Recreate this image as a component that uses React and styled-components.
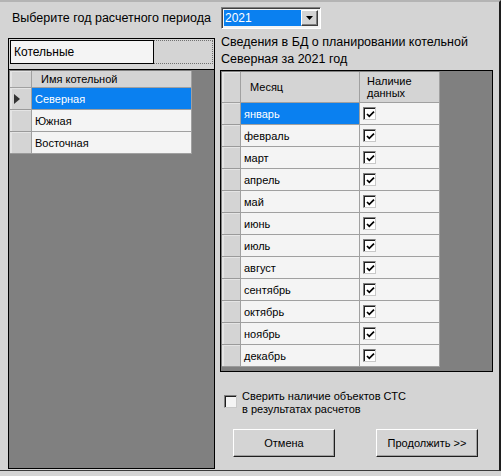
import styled, { createGlobalStyle } from "styled-components";

const GlobalStyle = createGlobalStyle`
  html, body {
    margin: 0;
    padding: 0;
    background: #d4d4d4;
  }
  * {
    box-sizing: border-box;
  }
`;

const boilers = ["Северная", "Южная", "Восточная"];

const months = [
  "январь",
  "февраль",
  "март",
  "апрель",
  "май",
  "июнь",
  "июль",
  "август",
  "сентябрь",
  "октябрь",
  "ноябрь",
  "декабрь",
];

function CheckMark() {
  return (
    <svg width="9" height="9" viewBox="0 0 9 9">
      <path d="M1 4 L3.3 6.4 L8 1.6" fill="none" stroke="#000" strokeWidth="1.7" />
    </svg>
  );
}

export default function App() {
  return (
    <>
      <GlobalStyle />
      <Window>
        <TopRow>
          <Label>Выберите год расчетного периода</Label>
          <Combo>
            <ComboValue>2021</ComboValue>
            <ComboButton>
              <svg width="7" height="4" viewBox="0 0 7 4">
                <polygon points="0,0 7,0 3.5,4" fill="#000" />
              </svg>
            </ComboButton>
          </Combo>
        </TopRow>

        <Main>
          <LeftPanel>
            <Caption>
              <DottedBox>
                <TextBox>Котельные</TextBox>
              </DottedBox>
            </Caption>
            <GridArea>
              <LeftRow $header>
                <RowHead $header />
                <HeadCell>Имя котельной</HeadCell>
              </LeftRow>
              {boilers.map((name, i) => (
                <LeftRow key={name}>
                  <RowHead>
                    {i === 0 && (
                      <svg width="6" height="10" viewBox="0 0 6 10">
                        <polygon points="0,0 6,5 0,10" fill="#333" />
                      </svg>
                    )}
                  </RowHead>
                  <Cell $selected={i === 0}>{name}</Cell>
                </LeftRow>
              ))}
            </GridArea>
          </LeftPanel>

          <RightCol>
            <Title>
              Сведения в БД о планировании котельной
              <br />
              Северная за 2021 год
            </Title>
            <MonthGrid>
              <MonthRow $header>
                <RowHead $header />
                <HeadCell>Месяц</HeadCell>
                <HeadCell $small>
                  Наличие
                  <br />
                  данных
                </HeadCell>
              </MonthRow>
              {months.map((m, i) => (
                <MonthRow key={m}>
                  <RowHead />
                  <Cell $selected={i === 0}>{m}</Cell>
                  <Cell>
                    <CheckBox>
                      <CheckMark />
                    </CheckBox>
                  </Cell>
                </MonthRow>
              ))}
            </MonthGrid>

            <Option>
              <CheckBox $plain />
              <OptionText>
                Сверить наличие объектов СТС
                <br />
                в результатах расчетов
              </OptionText>
            </Option>

            <Buttons>
              <Button>Отмена</Button>
              <Button>Продолжить &gt;&gt;</Button>
            </Buttons>
          </RightCol>
        </Main>
      </Window>
    </>
  );
}

const Window = styled.div`
  width: 501px;
  height: 471px;
  background: #d4d4d4;
  border-top: 2px solid #b4b4b4;
  border-right: 2px solid #1e1e1e;
  border-bottom: 1px solid #3a3a3a;
  padding: 5px 0 0 8px;
  font-family: "Liberation Sans", Arial, sans-serif;
  color: #000;
  display: flex;
  flex-direction: column;
  overflow: hidden;
`;

const TopRow = styled.div`
  display: flex;
  align-items: center;
  height: 22px;
  padding-left: 4px;
`;

const Label = styled.div`
  width: 209px;
  font-size: 12.5px;
`;

const Combo = styled.div`
  width: 100px;
  height: 22px;
  display: flex;
  padding: 2px;
  background: #f4f4f4;
  border: 1px solid;
  border-color: #808080 #ffffff #ffffff #808080;
  box-shadow: inset 1px 1px 0 #404040;
`;

const ComboValue = styled.div`
  flex: 1;
  background: #0a80f0;
  color: #fff;
  font-size: 12px;
  line-height: 16px;
  padding-left: 1px;
`;

const ComboButton = styled.div`
  width: 17px;
  display: flex;
  align-items: center;
  justify-content: center;
  background: #d4d4d4;
  border: 1px solid;
  border-color: #ffffff #404040 #404040 #ffffff;
  box-shadow: inset -1px -1px 0 #808080;
`;

const Main = styled.div`
  display: flex;
  align-items: flex-start;
  gap: 5px;
  margin-top: 5px;
`;

const LeftPanel = styled.div`
  width: 207px;
  height: 431px;
  margin-top: 4px;
  border: 1px solid #000;
  display: flex;
  flex-direction: column;
`;

const Caption = styled.div`
  height: 30px;
  padding: 1px 1px 0 1px;
`;

const DottedBox = styled.div`
  height: 24px;
  border: 1px dotted #707070;
`;

const TextBox = styled.div`
  width: 144px;
  height: 24px;
  margin: -1px 0 0 -1px;
  border: 1px solid #000;
  background: #f4f4f4;
  font-size: 12px;
  line-height: 22px;
  padding-left: 3px;
`;

const GridArea = styled.div`
  flex: 1;
  border-top: 1px solid #000;
  background: #808080;
  padding: 1px 0 0 1px;
`;

const LeftRow = styled.div`
  display: grid;
  grid-template-columns: 22px 160px;
  height: ${(p) => (p.$header ? "17px" : "22px")};
`;

const MonthRow = styled.div`
  display: grid;
  grid-template-columns: 19px 119px 80px;
  height: ${(p) => (p.$header ? "31px" : "22px")};
`;

const RowHead = styled.div`
  background: #d4d4d4;
  border-right: 1px solid #a0a0a0;
  border-bottom: 1px solid ${(p) => (p.$header ? "#a0a0a0" : "#9a9a9a")};
  box-shadow: inset 2px 1px 0 #e4e4e4;
  display: flex;
  align-items: center;
  padding-left: 4px;
`;

const HeadCell = styled.div`
  background: #d4d4d4;
  border-right: 1px solid #a0a0a0;
  border-bottom: 1px solid #a0a0a0;
  font-size: 11px;
  line-height: ${(p) => (p.$small ? "12px" : "14px")};
  display: flex;
  align-items: center;
  padding-left: ${(p) => (p.$small ? "7px" : "9px")};
`;

const Cell = styled.div`
  background: ${(p) => (p.$selected ? "#0a80f0" : "#f4f4f4")};
  color: ${(p) => (p.$selected ? "#fff" : "#000")};
  border-right: 1px solid #a0a0a0;
  border-bottom: 1px solid #a0a0a0;
  font-size: 11px;
  display: flex;
  align-items: center;
  padding-left: 3px;
`;

const CheckBox = styled.div`
  width: 13px;
  height: 13px;
  background: ${(p) => (p.$plain ? "#f4f4f4" : "#fff")};
  border: 1px solid;
  border-color: #808080 #c8c8c8 #c8c8c8 #808080;
  box-shadow: inset 1px 1px 0 #1e1e1e;
  display: flex;
  align-items: center;
  justify-content: center;
  padding: 1px 0 0 1px;
  flex-shrink: 0;
`;

const RightCol = styled.div`
  width: 276px;
  display: flex;
  flex-direction: column;
`;

const Title = styled.div`
  font-size: 12.5px;
  line-height: 17px;
  padding-left: 1px;
`;

const MonthGrid = styled.div`
  width: 273px;
  height: 302px;
  margin-top: 2px;
  border: 1px solid #000;
  background: #808080;
  padding: 1px 0 0 1px;
`;

const Option = styled.div`
  display: flex;
  align-items: flex-start;
  gap: 5px;
  margin-top: 18px;
  padding-left: 4px;

  & > div:first-child {
    margin-top: 5px;
  }
`;

const OptionText = styled.div`
  font-size: 11px;
  line-height: 13px;
`;

const Buttons = styled.div`
  display: flex;
  gap: 41px;
  margin-top: 13px;
  padding-left: 13px;
`;

const Button = styled.div`
  width: 102px;
  height: 28px;
  background: #d4d4d4;
  border: 1px solid;
  border-color: #ffffff #1e1e1e #1e1e1e #ffffff;
  box-shadow: inset -1px -1px 0 #a0a0a0;
  font-size: 11px;
  display: flex;
  align-items: center;
  justify-content: center;
`;
